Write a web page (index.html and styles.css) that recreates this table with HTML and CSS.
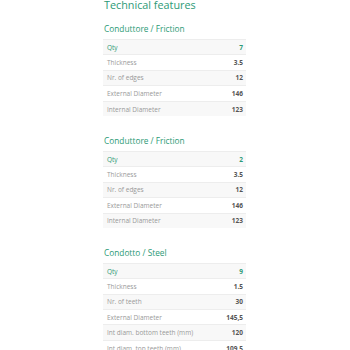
FILE: index.html
```html
<html>
<head>
  <link rel="stylesheet" href="styles.css">
</head>
<body>
<div class="features">
  <h2 class="title">Technical features</h2>

  <h3 class="group">Conduttore / Friction</h3>
  <table class="specs">
    <tr class="qty"><td>Qty</td><td>7</td></tr>
    <tr><td>Thickness</td><td>3.5</td></tr>
    <tr><td>Nr. of edges</td><td>12</td></tr>
    <tr><td>External Diameter</td><td>146</td></tr>
    <tr><td>Internal Diameter</td><td>123</td></tr>
  </table>

  <h3 class="group">Conduttore / Friction</h3>
  <table class="specs">
    <tr class="qty"><td>Qty</td><td>2</td></tr>
    <tr><td>Thickness</td><td>3.5</td></tr>
    <tr><td>Nr. of edges</td><td>12</td></tr>
    <tr><td>External Diameter</td><td>146</td></tr>
    <tr><td>Internal Diameter</td><td>123</td></tr>
  </table>

  <h3 class="group">Condotto / Steel</h3>
  <table class="specs">
    <tr class="qty"><td>Qty</td><td>9</td></tr>
    <tr><td>Thickness</td><td>1.5</td></tr>
    <tr><td>Nr. of teeth</td><td>30</td></tr>
    <tr><td>External Diameter</td><td>145,5</td></tr>
    <tr><td>Int diam. bottom teeth (mm)</td><td>120</td></tr>
    <tr><td>Int diam. top teeth (mm)</td><td>109,5</td></tr>
  </table>
</div>
</body>
</html>
```

FILE: styles.css
```css
html, body {
  margin: 0;
  background: #fff;
  font-family: "Open Sans", sans-serif;
  color: #999;
}
.features {
  width: 143px;
  margin-left: 103px;
  margin-top: -2px;
}
.title {
  margin: 0 0 11px 1px;
  font-size: 10.8px;
  font-weight: 400;
  line-height: 14px;
  color: #2c9a76;
}
.group {
  margin: 0 0 4px 1px;
  font-size: 8.3px;
  font-weight: 400;
  line-height: 12px;
  color: #2c9a76;
}
.specs {
  width: 100%;
  border-collapse: collapse;
  margin-bottom: 18.5px;
  font-size: 6.5px;
}
.specs tr {
  height: 15.4px;
  border-top: 1px solid #ededed;
}
.specs tr:nth-child(odd) {
  background: #f8f8f8;
}
.specs td {
  padding: 0 3px 0 4px;
}
.specs td:last-child {
  text-align: right;
  font-weight: 700;
  color: #555;
}
.specs tr.qty td {
  color: #2c9a76;
}
```
